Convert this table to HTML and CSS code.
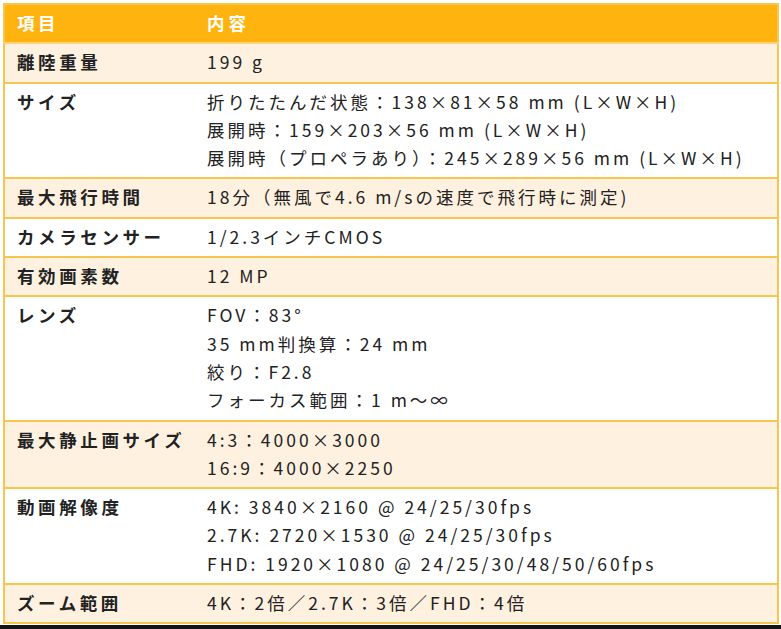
FILE: index.html
```html
<!DOCTYPE html>
<html lang="ja">
<head>
<meta charset="utf-8">
<title>仕様</title>
<link rel="stylesheet" href="styles.css">
</head>
<body>
<table class="spec">
  <thead>
    <tr><th class="label">項目</th><th>内容</th></tr>
  </thead>
  <tbody>
    <tr class="alt"><td class="label">離陸重量</td><td>199 g</td></tr>
    <tr><td class="label">サイズ</td><td>折りたたんだ状態：138×81×58 mm (L×W×H)<br>展開時：159×203×56 mm (L×W×H)<br>展開時（プロペラあり）：245×289×56 mm (L×W×H)</td></tr>
    <tr class="alt"><td class="label">最大飛行時間</td><td>18分（無風で4.6 m/sの速度で飛行時に測定)</td></tr>
    <tr><td class="label">カメラセンサー</td><td>1/2.3インチCMOS</td></tr>
    <tr class="alt"><td class="label">有効画素数</td><td>12 MP</td></tr>
    <tr><td class="label">レンズ</td><td>FOV：83°<br>35 mm判換算：24 mm<br>絞り：F2.8<br>フォーカス範囲：1 m～∞</td></tr>
    <tr class="alt"><td class="label">最大静止画サイズ</td><td>4:3：4000×3000<br>16:9：4000×2250</td></tr>
    <tr><td class="label">動画解像度</td><td>4K: 3840×2160 @ 24/25/30fps<br>2.7K: 2720×1530 @ 24/25/30fps<br>FHD: 1920×1080 @ 24/25/30/48/50/60fps</td></tr>
    <tr class="alt"><td class="label">ズーム範囲</td><td>4K：2倍／2.7K：3倍／FHD：4倍</td></tr>
  </tbody>
</table>
<div class="bottom-bar"></div>
</body>
</html>
```
FILE: styles.css
```css
html, body {
  margin: 0;
  padding: 0;
  background: #ffffff;
}
body {
  font-family: "Noto Sans CJK JP", "Noto Sans", sans-serif;
  font-size: 17.5px;
  color: #222222;
  padding: 3px 2px 0 3px;
}
.spec {
  width: 776px;
  border-collapse: collapse;
  border: 2px solid #f7c650;
}
.spec th,
.spec td {
  text-align: left;
  vertical-align: top;
  padding: 4px 6px 5px 12px;
  line-height: 28.3px;
  letter-spacing: 3px;
  border-bottom: 2px solid #f7c650;
}
.spec th {
  background: #ffb30f;
  color: #ffffff;
  font-weight: 700;
  letter-spacing: 4px;
  border-bottom: 2px solid #fbd27a;
}
.spec .label {
  width: 172px;
  font-weight: 700;
  letter-spacing: 3.6px;
}
.spec tr.alt td {
  background: #fef1e0;
}
.bottom-bar {
  margin: 1px 0 0 -3px;
  width: 781px;
  height: 6px;
  background: #141414;
}
```
